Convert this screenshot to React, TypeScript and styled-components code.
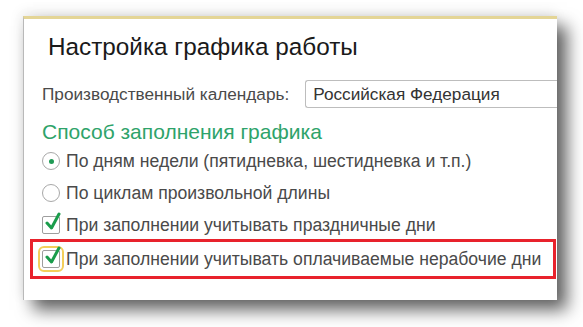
import React from 'react';
import styled, { createGlobalStyle } from 'styled-components';

const Global = createGlobalStyle`
  html, body { margin: 0; padding: 0; background: #ffffff; }
  body { font-family: Arial, "Liberation Sans", sans-serif; }
`;

const Page = styled.div`
  width: 583px;
  height: 327px;
  overflow: hidden;
  padding: 16px 0 0 23px;
  box-sizing: border-box;
`;

const Dialog = styled.div`
  width: 534px;
  height: 284px;
  background: #fff;
  border-top: 3px solid #e4d596;
  border-left: 1px solid #b9b9b9;
  box-sizing: border-box;
  overflow: hidden;
  box-shadow: 10px 10px 16px rgba(0, 0, 0, 0.62), -2px -4px 12px rgba(0, 0, 0, 0.08);
  display: flex;
  flex-direction: column;
  padding: 13px 0 0 18px;
`;

const Title = styled.div`
  font-size: 24.3px;
  color: #1a1a1a;
  padding-left: 6px;
  line-height: 30px;
`;

const FieldRow = styled.div`
  display: flex;
  align-items: center;
  gap: 16px;
  margin-top: 18px;
`;

const Label = styled.span`
  font-size: 17.2px;
  color: #4a4a4a;
  white-space: nowrap;
`;

const Input = styled.div`
  flex: 0 0 300px;
  height: 28px;
  border: 1px solid #bdbdbd;
  border-right: none;
  border-radius: 3px 0 0 3px;
  box-sizing: border-box;
  display: flex;
  align-items: center;
  padding-left: 7px;
  font-size: 17.2px;
  color: #333;
`;

const Section = styled.div`
  font-size: 21px;
  color: #2ea36a;
  margin-top: 11px;
  line-height: 26px;
`;

const Option = styled.div<{ $gap?: number }>`
  display: flex;
  align-items: center;
  gap: 6px;
  margin-top: ${p => p.$gap ?? 8}px;
  font-size: 17.6px;
  color: #4a4a4a;
  line-height: 24px;
  white-space: nowrap;
`;

const Radio = styled.span<{ $on?: boolean }>`
  width: 16px;
  height: 16px;
  border: 1px solid #a8a8a8;
  border-radius: 50%;
  display: flex;
  align-items: center;
  justify-content: center;
  &::after {
    content: '';
    width: 5px;
    height: 5px;
    border-radius: 50%;
    background: ${p => (p.$on ? '#1f9a55' : 'transparent')};
  }
`;

const Box = styled.span<{ $focus?: boolean }>`
  position: relative;
  width: 16px;
  height: 16px;
  border: 1px solid #9e9e9e;
  border-radius: 2px;
  outline: ${p => (p.$focus ? '2px solid #f3cf5a' : 'none')};
  outline-offset: 2px;
  flex: none;
  svg {
    position: absolute;
    left: 1px;
    top: -5px;
  }
`;

const Highlight = styled.div`
  margin: 2px 0 0 -12px;
  width: 526px;
  border: 3px solid #e8222c;
  box-sizing: border-box;
  padding: 5px 0 5px 9px;
  & > div { margin-top: 0; }
`;

const Check = () => (
  <svg width="18" height="20" viewBox="0 0 18 20">
    <path d="M3 11 L7.5 16 L15 2" fill="none" stroke="#1a9c4b" strokeWidth="3" strokeLinecap="round" strokeLinejoin="round" />
  </svg>
);

export default function App() {
  return (
    <Page>
      <Global />
      <Dialog>
        <Title>Настройка графика работы</Title>
        <FieldRow>
          <Label>Производственный календарь:</Label>
          <Input>Российская Федерация</Input>
        </FieldRow>
        <Section>Способ заполнения графика</Section>
        <Option $gap={4}><Radio $on />По дням недели (пятидневка, шестидневка и т.п.)</Option>
        <Option $gap={8}><Radio />По циклам произвольной длины</Option>
        <Option $gap={8}><Box><Check /></Box>При заполнении учитывать праздничные дни</Option>
        <Highlight>
          <Option><Box $focus><Check /></Box>При заполнении учитывать оплачиваемые нерабочие дни</Option>
        </Highlight>
      </Dialog>
    </Page>
  );
}
